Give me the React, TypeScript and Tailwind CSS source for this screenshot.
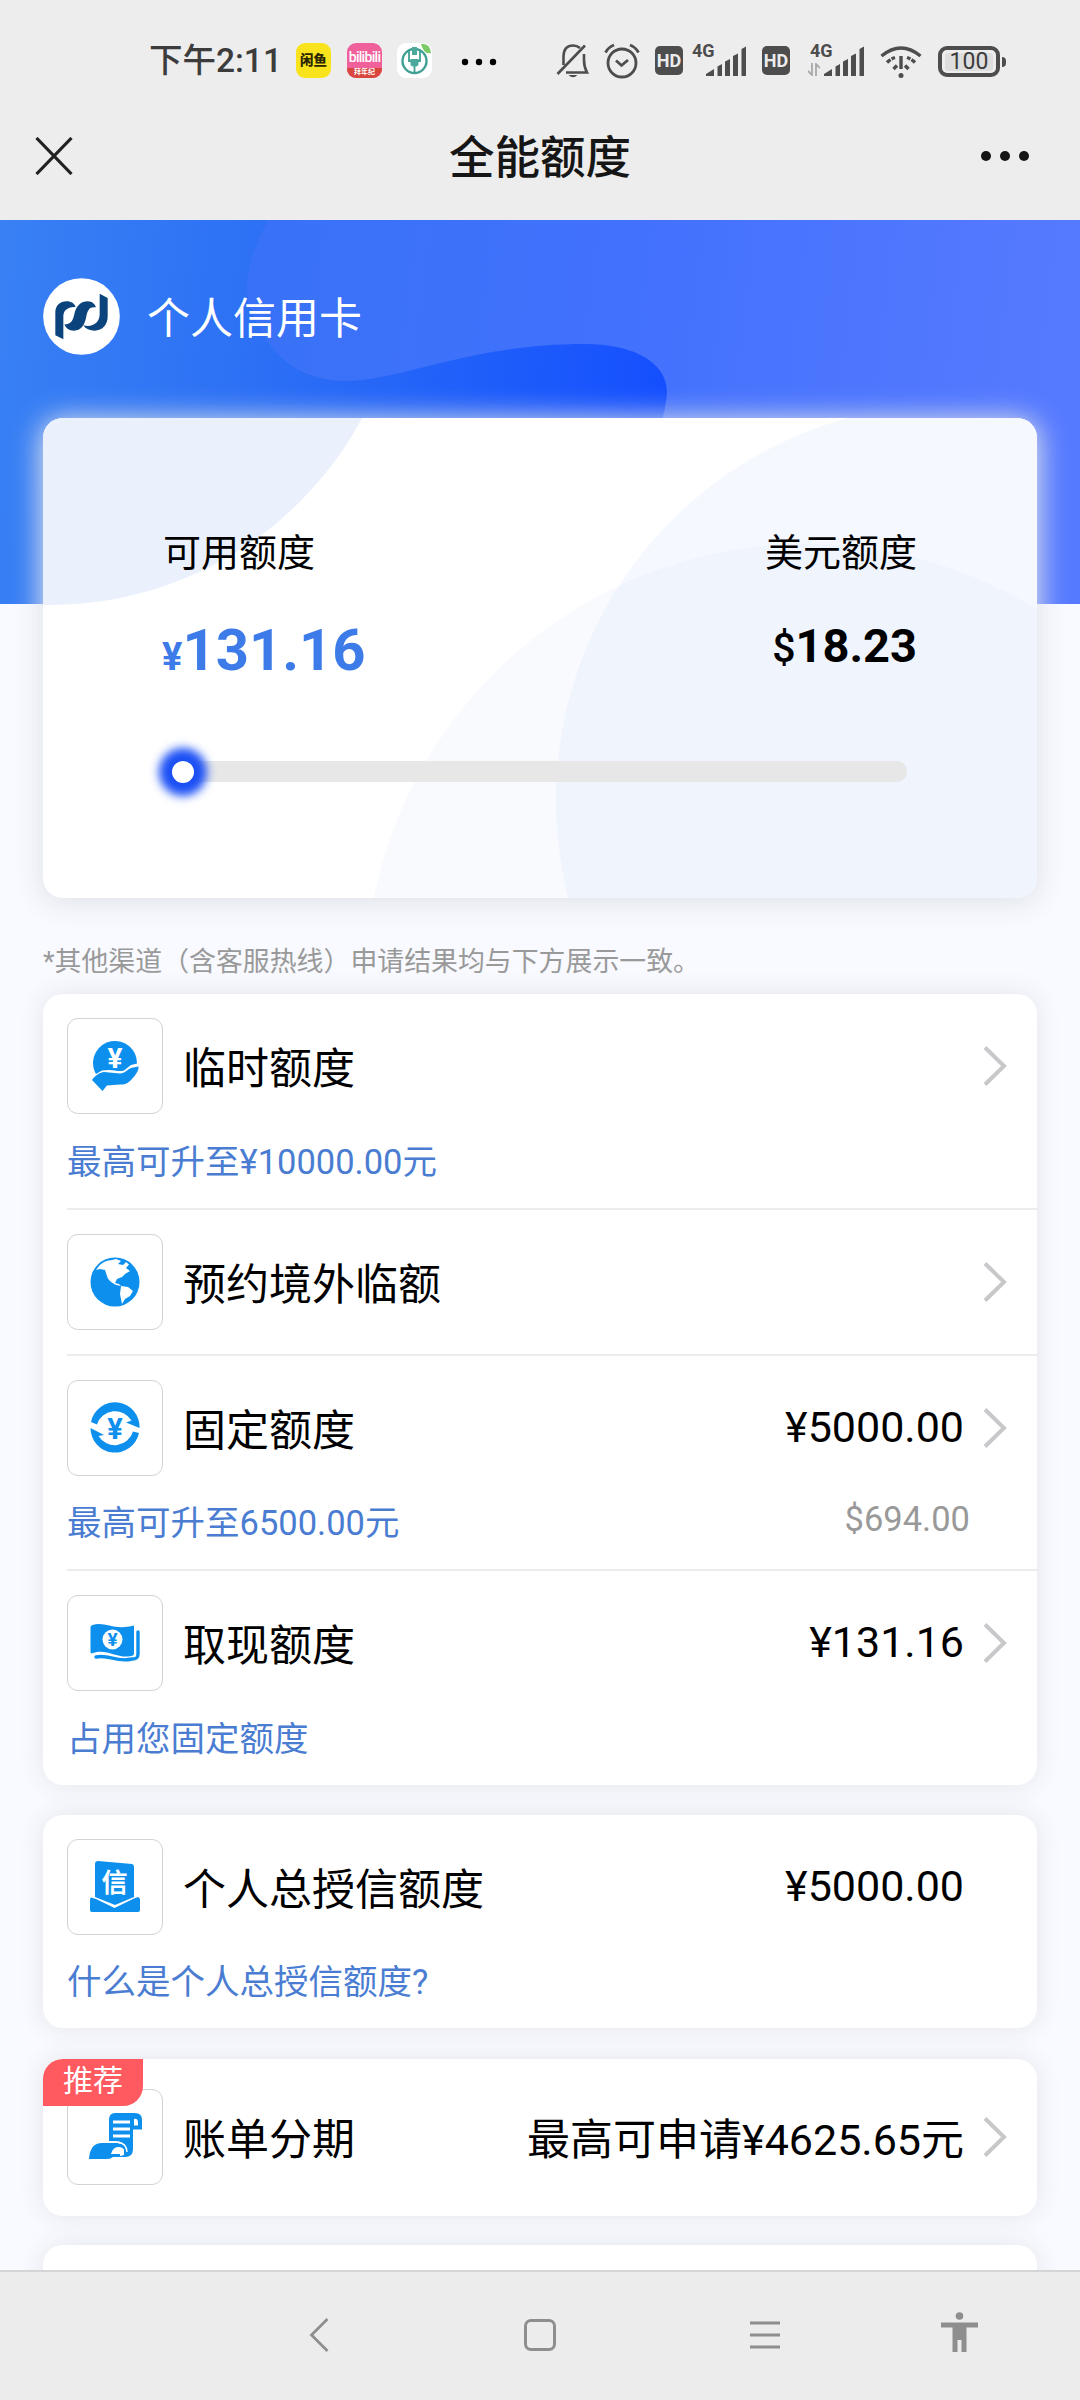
import React from 'react';
import clsx from 'clsx';

const BLUE = '#0d8fee';

const Yen: React.FC<{ x: number; y: number; size: number; fill: string }> = ({
  x,
  y,
  size,
  fill,
}) => (
  <text
    x={x}
    y={y}
    fontSize={size}
    fill={fill}
    fontWeight={700}
    textAnchor="middle"
    fontFamily="Roboto, sans-serif"
  >
    ¥
  </text>
);

const HandCoinIcon = () => (
  <svg viewBox="0 0 52 52" className="size-[52px]">
    <path
      d="M5.5 31A22 22 0 1 1 48 23.5L42 25L35 30.5C30 32 26 30 20 30L13 30.5L7 34Z"
      fill={BLUE}
    />
    <Yen x={26} y={27.5} size={28} fill="#fff" />
    <path
      d="M3 40C7 34.5 11 32.5 15 32L31 33.5C36 33.5 38 29.5 42 28L49.5 26.5C50 31 46 36 41 41C38 44 35 44.5 31 44.5L18 45.5L13.5 51Z"
      fill={BLUE}
    />
  </svg>
);

const GlobeIcon = () => (
  <svg viewBox="0 0 52 52" className="size-[52px]">
    <circle cx="26" cy="26" r="24.5" fill={BLUE} />
    <path
      d="M10 10C15 5 19 4.5 23 4L27 3L32 5L29 8L34 9L37 6L40 8.5L37 12L41 15L36 18L33 21L28 23L26 27L30 28L32 30L27 29C22 26 19 24 18 20L16 14L11 13L7 14Z"
      fill="#fff"
    />
    <path d="M32 30L39 31L44 35L41 40L36 43L33 48L32 43L31 38Z" fill="#fff" />
  </svg>
);

const CycleIcon = () => (
  <svg viewBox="0 0 52 52" className="size-[52px]">
    <path
      d="M2 20A24.5 24.5 0 0 1 50.5 26L37 20.5L42.5 18.5A19 19 0 0 0 8 22.5Z"
      fill={BLUE}
    />
    <path
      d="M50 31A24.5 24.5 0 0 1 1.5 26L15 33L9.5 34A19 19 0 0 0 44 29.5Z"
      fill={BLUE}
    />
    <Yen x={26} y={36.5} size={29} fill={BLUE} />
  </svg>
);

const CashIcon = () => (
  <svg viewBox="0 0 52 52" className="size-[52px]">
    <path
      d="M3.5 8C16 4 25 14 45 8.5V36C45 38 44 39 42 39C28 42 18 31 4 36C2 37 1.5 36 1.5 34V11C1.5 9 2 8.5 3.5 8Z"
      fill={BLUE}
    />
    <path
      d="M49 15V37C49 41 47 42 43 42C27 46 21 37 7 40"
      fill="none"
      stroke={BLUE}
      strokeWidth="3.4"
      strokeLinecap="round"
    />
    <circle cx="23.5" cy="22.5" r="10" fill="#fff" />
    <Yen x={23.5} y={29} size={19} fill={BLUE} />
  </svg>
);

const CreditIcon = () => (
  <svg viewBox="0 0 52 52" className="size-[52px]">
    <path d="M9 0L43 3Q45 3.5 45 6V36L26 44L6 36V3Q6 0 9 0Z" fill={BLUE} />
    <path
      d="M2 36.5L7 38L25.5 47L45 37.5L49 36Q51 36.5 51 38.5V49Q51 51 49 51H3Q1 51 1 49V38Z"
      fill={BLUE}
    />
    <text
      x="25.5"
      y="31"
      fontSize="26"
      fontWeight={700}
      fill="#fff"
      textAnchor="middle"
      fontFamily="'Noto Sans CJK SC', sans-serif"
    >
      信
    </text>
  </svg>
);

const BillIcon = () => (
  <svg viewBox="0 0 52 52" className="size-[52px] overflow-visible">
    <path
      d="M26 2H46Q53 2 53 9V18.5H44V38Q44 46 36 46H28L35 44V38Q35 30 27 30H20V9Q20 2 26 2Z"
      fill={BLUE}
    />
    <rect x="24" y="9.5" width="17" height="3" fill="#fff" />
    <rect x="24" y="16.5" width="17" height="3" fill="#fff" />
    <rect x="24" y="23.5" width="17" height="3" fill="#fff" />
    <path d="M45 8Q49 7 49 12V14.5H45Z" fill="#fff" />
    <path
      d="M0 48Q1 32 13 32H28Q37 32 38 41H36Q35 36 29 36Q24 36 22 43L31 43V46H24Q22 48 18 48Z"
      fill={BLUE}
    />
    <path d="M29 31.5Q37.5 32 38 41" fill="none" stroke="#fff" strokeWidth="1.4" />
    <path d="M24 41.5Q27.5 37 32 41Z" fill="#fff" />
  </svg>
);

const SignalIcon = () => (
  <svg viewBox="0 0 40 30" className="h-[30px] w-10 fill-[#4d4d4d]">
    <path d="M0 30V28L8 23V30ZM11.5 30V20.5L16 18V30ZM19 30V15.5L24 13V30ZM27 30V10L32 7.5V30ZM35.5 30V3L40 .5V30Z" />
  </svg>
);

const HdBadge = () => (
  <span className="flex h-[29px] w-7 items-center justify-center rounded-[5px] bg-[#4d4d4d] font-[Roboto,sans-serif] text-[18px] leading-none font-bold text-[#ececec]">
    HD
  </span>
);

const StatusBar = () => (
  <div className="flex h-[108px] items-start pt-[43px] pl-[149px] text-[#3c3c3c]">
    <span className="-mt-[3px] h-9 w-[147px] text-[33.5px] leading-[42px] font-medium whitespace-nowrap">
      下午2:11
    </span>
    <span className="flex size-[35px] items-center justify-center rounded-[9px] bg-[#f9e31c] text-[13.5px] leading-none font-black text-[#2b2600]">
      闲鱼
    </span>
    <span className="ml-4 flex size-[35px] flex-col items-center overflow-hidden rounded-[9px] bg-[#f0609a] leading-none text-white">
      <span className="mt-[3px] h-[22px] font-[Roboto,sans-serif] text-[14px] leading-[22px] font-medium tracking-tighter">
        bilibili
      </span>
      <span className="h-2.5 w-full bg-[#d8463e] text-center text-[7px] leading-[9px] font-bold">
        拜年纪
      </span>
    </span>
    <svg viewBox="0 0 35 35" className="ml-[15px] size-[35px]">
      <rect width="35" height="35" rx="9" fill="#fff" />
      <circle cx="17.5" cy="18" r="12" fill="none" stroke="#3f9f93" strokeWidth="2.4" />
      <path
        d="M17.5 20V30M12 8V18H23V8"
        fill="none"
        stroke="#3f9f93"
        strokeWidth="1.8"
      />
      <path d="M15 4H20V12H15ZM13.5 16H21.5V22L19.5 23.5H15.5L13.5 22Z" fill="#4ea99d" />
      <path d="M24 1Q33 0 34 10Q27 12 24 1Z" fill="#7acb66" />
    </svg>
    <svg viewBox="0 0 36 8" className="mt-[15px] ml-[29px] h-2 w-9 fill-black">
      <circle cx="4" cy="4" r="3.2" />
      <circle cx="18" cy="4" r="3.2" />
      <circle cx="32" cy="4" r="3.2" />
    </svg>

    {/* muted bell */}
    <svg
      viewBox="0 0 34 36"
      className="ml-[59px] h-9 w-[34px]"
      fill="none"
      stroke="#4d4d4d"
      strokeWidth="2.6"
    >
      <path d="M7.5 22V13Q8 2.5 17 2.5Q21 2.5 24 5" />
      <path d="M28 11V17Q28 24 31 29.5H10" />
      <path d="M1.5 31L29 2.5" />
      <path d="M12.5 32Q17 36.5 21.5 32Z" fill="#4d4d4d" stroke="none" />
    </svg>
    <svg
      viewBox="0 0 36 36"
      className="ml-3.5 size-9"
      fill="none"
      stroke="#4d4d4d"
      strokeWidth="2.8"
    >
      <circle cx="18" cy="20" r="14" />
      <path d="M12 17.5L17.5 22.5L24 17M1.5 9.5Q4 4.5 10 2M34.5 9.5Q32 4.5 26 2" />
    </svg>
    <div className="mt-[3px] ml-[15px]">
      <HdBadge />
    </div>
    <div className="relative mt-[3px] ml-[23px]">
      <SignalIcon />
      <span className="absolute -top-1 -left-3.5 font-[Roboto,sans-serif] text-[18px] leading-[18px] font-bold text-[#4d4d4d]">
        4G
      </span>
    </div>
    <div className="mt-[3px] ml-4">
      <HdBadge />
    </div>
    <div className="relative mt-[3px] ml-[34px]">
      <SignalIcon />
      <span className="absolute -top-1 -left-3.5 font-[Roboto,sans-serif] text-[18px] leading-[18px] font-bold text-[#4d4d4d]">
        4G
      </span>
      <svg
        viewBox="0 0 12 13"
        className="absolute top-[17px] -left-4 h-[13px] w-3"
        fill="none"
        stroke="#a8a8a8"
        strokeWidth="1.8"
      >
        <path d="M4 0V12L0 8M8 13V1L12 5" />
      </svg>
    </div>
    <svg
      viewBox="0 0 42 34"
      className="mt-0.5 ml-4 h-[34px] w-[42px]"
      fill="none"
      stroke="#4d4d4d"
      strokeWidth="3.4"
    >
      <path d="M1.5 11Q21 -5 40.5 11" />
      <path d="M7 17.5Q10.5 14 15 12.5M35 17.5Q31.5 14 27 12.5" strokeDasharray="4.5 1.2" />
      <path d="M13.5 24L17 20.5M28.5 24L25 20.5" />
      <path d="M21 11V24" />
      <circle cx="21" cy="30.5" r="2.5" fill="#4d4d4d" stroke="none" />
    </svg>
    <div className="mt-[3px] ml-4 flex items-center gap-0.5">
      <span className="flex h-[31px] w-[62px] items-center justify-center rounded-[9px] border-4 border-[#4d4d4d]">
        <span className="flex h-[18px] w-12 items-center justify-center rounded-[3px] bg-[#dedede] font-[Roboto,sans-serif] text-[23px] leading-none text-[#3c3c3c]">
          100
        </span>
      </span>
      <span className="h-2.5 w-1 rounded-r-sm bg-[#4d4d4d]" />
    </div>
  </div>
);

const TitleBar = () => (
  <div className="flex h-[112px] items-center justify-between pr-[51px] pb-4 pl-[35px]">
    <svg viewBox="0 0 38 38" className="size-[38px]" stroke="#222" strokeWidth="3.2">
      <path d="M1.5 1L36.5 37M36.5 1L1.5 37" />
    </svg>
    <h1 className="mt-1.5 ml-[26px] text-[45.5px] leading-none font-medium text-[#161616]">
      全能额度
    </h1>
    <svg viewBox="0 0 48 10" className="h-2.5 w-12 fill-[#161616]">
      <circle cx="5" cy="5" r="5" />
      <circle cx="24" cy="5" r="5" />
      <circle cx="43" cy="5" r="5" />
    </svg>
  </div>
);

const BankLogo = () => (
  <svg viewBox="69 113 231 231" className="size-[77px]">
    <circle cx="184.5" cy="228.5" r="115" fill="#fff" />
    <g fill="#0b437c">
      <path d="M106 285V216C106 196 120 183 140 183C154 183 164 190 167 200C150 198 131 206 130 226V297Z" />
      <path d="M133 252C152 254 159 240 163 222C168 196 184 183 203 183C217 183 225 192 228 201C209 198 203 208 199 228C194 257 182 271 162 271C147 271 138 264 133 252Z" />
      <path d="M190 255C217 262 239 248 239 222V160L263 173V228C263 255 246 271 224 271C209 271 197 266 190 255Z" />
    </g>
  </svg>
);

const HeroBackground = () => (
  <svg viewBox="0 0 1080 384" className="absolute inset-0 h-full w-full">
    <defs>
      <linearGradient id="deep" gradientUnits="userSpaceOnUse" x1="0" y1="100" x2="670" y2="170">
        <stop offset="0" stopColor="#3880f4" />
        <stop offset="0.4" stopColor="#2c6ff5" />
        <stop offset="1" stopColor="#154ffe" />
      </linearGradient>
      <linearGradient id="soft" gradientUnits="userSpaceOnUse" x1="245" y1="0" x2="1080" y2="100">
        <stop offset="0" stopColor="#3872f6" />
        <stop offset="0.45" stopColor="#4271fd" />
        <stop offset="1" stopColor="#567aff" />
      </linearGradient>
    </defs>
    <rect width="1080" height="384" fill="url(#deep)" />
    <path
      d="M268 0C242 50 242 78 258 104C274 140 305 161 345 161C400 161 470 124 584 124C640 124 667 146 667 172Q666 190 658 214V384H1080V0Z"
      fill="url(#soft)"
    />
  </svg>
);

const LimitCard = () => (
  <section className="relative z-10 mx-[43px] -mt-[186px] h-[480px] overflow-hidden rounded-[20px] bg-white shadow-[0_3px_28px_3px_#e0e3e9]">
    <svg viewBox="43 418 994 480" className="absolute inset-0 h-full w-full">
      <circle cx="50" cy="251" r="354" fill="#eaf1fd" />
      <circle cx="952" cy="800" r="396" fill="#f5f8fe" />
      <circle cx="806" cy="985" r="441" fill="#d5e2fa" fillOpacity="0.17" />
    </svg>
    <div className="relative flex justify-between pt-[107px] pr-[120px] pl-[119px] text-black">
      <div>
        <div className="pl-px text-[38px] leading-[56px]">可用额度</div>
        <div className="mt-[35px] text-[58px] leading-[68px] font-bold text-[#3c7be8]">
          <span className="text-[38px]">¥</span>131.16
        </div>
      </div>
      <div className="text-right">
        <div className="text-[38px] leading-[56px]">美元额度</div>
        <div className="mt-[34px] text-[47px] leading-[62px] font-bold">
          <span className="text-[41px] font-medium">$</span>18.23
        </div>
      </div>
    </div>
    <div className="relative mt-[70px] mr-[130px] ml-[129px] flex h-[21px] items-center rounded-r-[10px] bg-[#e7e7e7]">
      <span className="size-[22px] rounded-full bg-white shadow-[0_0_10px_13px_#1c50f5]" />
    </div>
  </section>
);

const Chevron = () => (
  <svg viewBox="0 0 24 40" className="h-10 w-6" fill="none" stroke="#c8c8cb" strokeWidth="4">
    <path d="M2 1.5L21 20L2 38.5" />
  </svg>
);

interface LimitItem {
  title: string;
  icon: React.ReactNode;
  amount?: string;
  hint?: string;
  extra?: string;
  arrow?: boolean;
}

const LimitRow: React.FC<{ item: LimitItem; last?: boolean }> = ({ item, last }) => (
  <div className={clsx('ml-6', !last && 'border-b-2 border-[#ececec]')}>
    <div className="flex items-center pt-6 pr-[30px]">
      <div className="flex size-24 items-center justify-center rounded-[11px] border border-[#d3d3d3]">
        {item.icon}
      </div>
      <span className="mt-1.5 ml-5 text-[43px] leading-[60px]">{item.title}</span>
      <span className={clsx('ml-auto text-[43px] leading-[60px]', item.hint ? '-mt-0.5' : 'mt-1.5')}>
        {item.amount}
      </span>
      <span className="ml-[19px] w-6">{item.arrow && <Chevron />}</span>
    </div>
    {item.hint ? (
      <div className="flex h-[93.5px] items-center justify-between pr-[67px] text-[34.5px] leading-none">
        <span className="mt-0.5 text-[#4a7dd2]">{item.hint}</span>
        <span className="-mt-1.5 text-[#999]">{item.extra}</span>
      </div>
    ) : (
      <div className="h-6" />
    )}
  </div>
);

const LIMITS: LimitItem[] = [
  { title: '临时额度', icon: <HandCoinIcon />, hint: '最高可升至¥10000.00元', arrow: true },
  { title: '预约境外临额', icon: <GlobeIcon />, arrow: true },
  {
    title: '固定额度',
    icon: <CycleIcon />,
    amount: '¥5000.00',
    hint: '最高可升至6500.00元',
    extra: '$694.00',
    arrow: true,
  },
  {
    title: '取现额度',
    icon: <CashIcon />,
    amount: '¥131.16',
    hint: '占用您固定额度',
    arrow: true,
  },
];

const Panel: React.FC<{ className?: string; children?: React.ReactNode }> = ({
  className,
  children,
}) => (
  <section
    className={clsx(
      'relative mx-[43px] rounded-[20px] bg-white shadow-[0_0_26px_#e4e5e9]',
      className
    )}
  >
    {children}
  </section>
);

const NavBar = () => (
  <nav className="relative z-20 flex h-[130px] shrink-0 items-center border-t-2 border-[#d3d5d6] bg-[#ececec] pb-0.5 pl-[309px]">
    <svg
      viewBox="0 0 20 34"
      className="h-[34px] w-5"
      fill="none"
      stroke="#8e8e8e"
      strokeWidth="2.8"
    >
      <path d="M18.5 1L2.5 17L18.5 33" />
    </svg>
    <span className="ml-[195px] size-8 rounded-[7px] border-[3px] border-[#8e8e8e]" />
    <svg viewBox="0 0 30 28" className="ml-[194px] h-7 w-[30px]" stroke="#8e8e8e" strokeWidth="3">
      <path d="M0 2H30M0 14H30M0 26H30" />
    </svg>
    <svg viewBox="0 0 37 40" className="-mt-1.5 ml-[161px] h-10 w-[37px] fill-[#8e8e8e]">
      <circle cx="18.5" cy="4" r="3.8" />
      <path d="M0 10.5H37V15.5H25.5V40H20.5V28H16.5V40H11.5V15.5H0Z" />
    </svg>
  </nav>
);

const App: React.FC = () => (
  <div className="flex h-[2400px] w-[1080px] flex-col overflow-hidden bg-[#f8faff] font-[Roboto,'Noto_Sans_CJK_SC',sans-serif] text-black">
    <header className="h-[220px] shrink-0 bg-[#ededed]">
      <StatusBar />
      <TitleBar />
    </header>

    <main className="min-h-0 flex-1 overflow-hidden">
      <div className="relative h-[384px]">
        <HeroBackground />
        <div className="relative flex items-center pt-[58px] pl-[43px]">
          <BankLogo />
          <span className="mt-1 ml-[27px] text-[43px] leading-[60px] text-white">个人信用卡</span>
        </div>
      </div>
      <LimitCard />

      <p className="mt-11 ml-[43px] h-[52px] text-[26.9px] leading-10 text-[#999]">
        *其他渠道（含客服热线）申请结果均与下方展示一致。
      </p>

      <Panel>
        {LIMITS.map((item, i) => (
          <LimitRow key={item.title} item={item} last={i === LIMITS.length - 1} />
        ))}
      </Panel>

      <Panel className="mt-[30px]">
        <LimitRow
          item={{
            title: '个人总授信额度',
            icon: <CreditIcon />,
            amount: '¥5000.00',
            hint: '什么是个人总授信额度?',
          }}
          last
        />
      </Panel>

      <Panel className="mt-[31px] pt-1.5 pb-[7px]">
        <LimitRow
          item={{
            title: '账单分期',
            icon: <BillIcon />,
            amount: '最高可申请¥4625.65元',
            arrow: true,
          }}
          last
        />
        <span className="absolute top-0 left-0 flex h-[47px] w-[100px] items-center justify-center rounded-tl-[20px] rounded-br-[20px] bg-[#ff5a5f] pb-1 text-[30px] leading-none text-white">
          推荐
        </span>
      </Panel>

      <Panel className="mt-[29px] h-40" />
    </main>

    <NavBar />
  </div>
);

export default App;
